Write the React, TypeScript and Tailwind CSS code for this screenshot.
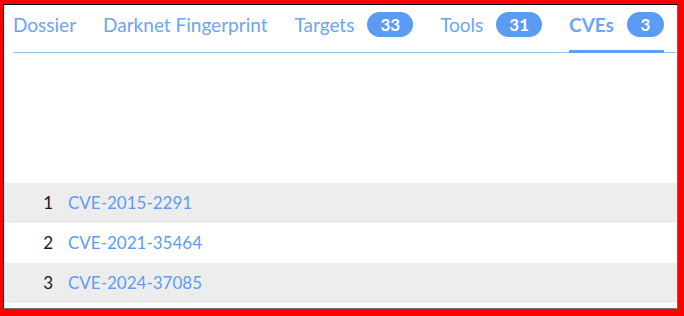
import React from 'react';

const tabs = [
  { label: 'Dossier' },
  { label: 'Darknet Fingerprint' },
  { label: 'Targets', count: 33 },
  { label: 'Tools', count: 31 },
  { label: 'CVEs', count: 3, active: true },
];

const cves = ['CVE-2015-2291', 'CVE-2021-35464', 'CVE-2024-37085'];

export default function App() {
  return (
    <div
      className="w-[684px] h-[316px] bg-[#ff0000] pt-[4px] pl-[3px] pr-[6px] pb-[7px]"
      style={{ fontFamily: 'Lato, "Noto Sans", sans-serif' }}
    >
      <div className="h-full bg-white border border-black border-r-[#666] border-b-[#777] flex flex-col">
        {/* Tabs */}
        <div className="ml-[9px] mr-[1px] border-b border-[#8fbaf7] flex items-stretch h-[48px] gap-[27px]">
          {tabs.map((t) => (
            <div
              key={t.label}
              className={`flex items-center gap-[13px] -mb-px pb-[7px] border-b-[3px] ${t.active ? 'border-[#5d9df5] font-bold' : 'border-transparent'}`}
            >
              <span className="text-[19px] text-[#6aa6f6] leading-none">{t.label}</span>
              {t.count !== undefined && (
                <span className="h-[25px] min-w-[37px] px-[13px] rounded-full bg-[#5b9bf4] text-white text-[17px] font-bold flex items-center justify-center leading-none">
                  {t.count}
                </span>
              )}
            </div>
          ))}
        </div>

        <div className="h-[130px]" />

        {/* CVE list */}
        <div className="flex flex-col">
          {cves.map((c, i) => (
            <div
              key={c}
              className={`h-[40px] flex items-center text-[17px] ${i % 2 === 0 ? 'bg-[#ecedec]' : 'bg-white'}`}
            >
              <span className="w-[64px] text-right pr-[15px] text-[#1a1a1a]">{i + 1}</span>
              <span className="text-[#5d9cf5]">{c}</span>
            </div>
          ))}
        </div>
      </div>
    </div>
  );
}
